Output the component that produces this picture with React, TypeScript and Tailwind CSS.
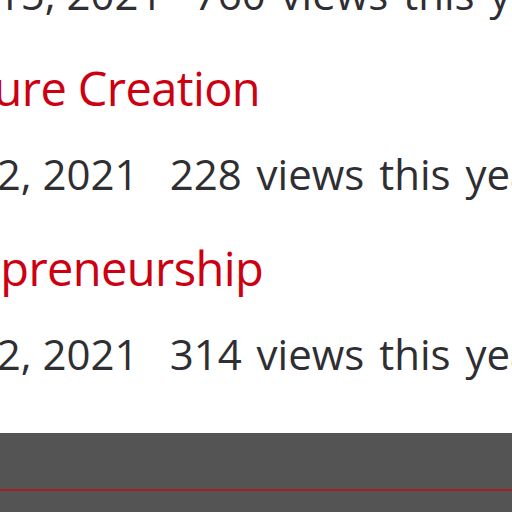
import React from 'react';

interface IPost {
    title: string;
    date: string;
    views: number;
    shift: string;
}

// 화면에 보이는 글 목록 (shift = 왼쪽으로 밀려서 잘린 만큼)
const posts: IPost[] = [
    {title: 'Venture Creation', date: 'Nov 2, 2021', views: 228, shift: '-ml-[104px]'},
    {title: 'Entrepreneurship', date: 'Nov 2, 2021', views: 314, shift: '-ml-[114px]'},
];

function MetaLine({date, views}: {date: string; views: number}) {
    return (
        <div className="whitespace-nowrap text-[42px] leading-[56px] text-[#2f2f33] -ml-[92px]">
            <span>{date}</span>
            <span className="ml-[31px] [word-spacing:4px]">{views} views this year</span>
        </div>
    );
}

function App() {
    return (
        <div className="w-[512px] h-[512px] flex flex-col bg-white overflow-hidden font-['Open_Sans',sans-serif]">
            <div className="flex-1 min-h-0 overflow-hidden">
                <div className="-mt-[34px]">
                    <div className="mb-[36px]">
                        <MetaLine date="Nov 15, 2021" views={760}/>
                    </div>
                    {posts.map(post => (
                        <div key={post.title} className="mb-[36px]">
                            <div className={`whitespace-nowrap text-[47px] leading-[60px] tracking-[-0.6px] text-[#cc0011] mb-[28px] ${post.shift}`}>
                                {post.title}
                            </div>
                            <MetaLine date={post.date} views={post.views}/>
                        </div>
                    ))}
                </div>
            </div>
            <footer className="h-[79px] shrink-0 bg-[#545454] pt-[56px]">
                <div className="h-[2px] bg-[#a31f25]"/>
            </footer>
        </div>
    );
}

export default App;
